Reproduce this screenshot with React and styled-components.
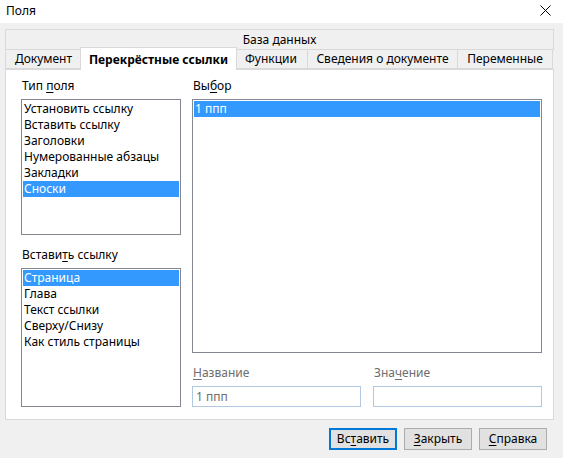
import React from 'react';
import styled, { createGlobalStyle } from 'styled-components';

const GlobalStyle = createGlobalStyle`
  html, body {
    margin: 0;
    padding: 0;
    background: #f0f0f0;
  }
  body {
    font-family: "Noto Sans", "Open Sans", sans-serif;
    font-size: 12px;
    color: #000;
  }
`;

const Window = styled.div`
  width: 563px;
  height: 458px;
  display: flex;
  flex-direction: column;
  background: #f0f0f0;
  overflow: hidden;
`;

const TitleBar = styled.div`
  height: 23px;
  background: #fff;
  display: flex;
  align-items: center;
  justify-content: space-between;
  padding: 0 12px 2px 6px;
  box-sizing: border-box;
`;

const Title = styled.span`
  font-size: 12px;
  line-height: 16px;
`;

const Body = styled.div`
  flex: 1;
  display: flex;
  flex-direction: column;
  padding: 6px 9px 0 5px;
`;

const TabRow = styled.div`
  display: flex;
  height: 20px;
`;

const Tab = styled.div`
  box-sizing: border-box;
  width: ${p => p.$w}px;
  flex: ${p => (p.$w ? 'none' : '1')};
  height: ${p => (p.$active ? '23px' : '100%')};
  margin: ${p => (p.$active ? '-2px -2px -1px -2px' : '0')};
  padding-top: ${p => (p.$active ? '1px' : '0')};
  position: relative;
  z-index: ${p => (p.$active ? 2 : 1)};
  display: flex;
  align-items: center;
  justify-content: center;
  background: ${p => (p.$active ? '#fff' : '#f0f0f0')};
  border: 1px solid #d9d9d9;
  border-bottom: ${p => (p.$active ? 'none' : '1px solid #d9d9d9')};
  border-left: ${p => (p.$first || p.$active ? '1px solid #d9d9d9' : 'none')};
  font-weight: ${p => (p.$active ? 700 : 400)};
  white-space: nowrap;
  line-height: 16px;
`;

const TopTabRow = styled(TabRow)`
  height: 21px;
  margin-bottom: -1px;
`;

const Panel = styled.div`
  box-sizing: border-box;
  height: 351px;
  background: #fff;
  border: 1px solid #d9d9d9;
  display: flex;
  gap: 11px;
  padding: 8px 11px 12px 15px;
`;

const LeftCol = styled.div`
  width: 160px;
  display: flex;
  flex-direction: column;
`;

const RightCol = styled.div`
  flex: 1;
  display: flex;
  flex-direction: column;
`;

const Label = styled.div`
  height: 16px;
  line-height: 16px;
  margin: ${p => p.$top || 0}px 0 5px 1px;
  color: ${p => (p.$disabled ? '#6d6d6d' : '#000')};
  white-space: nowrap;
`;

const Key = styled.span`
  text-decoration: underline;
  text-underline-offset: 2px;
`;

const ListBox = styled.div`
  box-sizing: border-box;
  height: ${p => p.$h}px;
  border: 1px solid #828790;
  padding: 1px;
  background: #fff;
`;

const Item = styled.div`
  height: 16px;
  line-height: 16px;
  padding-left: 1px;
  white-space: nowrap;
  background: ${p => (p.$selected ? '#3399ff' : 'transparent')};
  color: ${p => (p.$selected ? '#fff' : '#000')};
`;

const FieldRow = styled.div`
  display: flex;
  gap: 12px;
  margin-top: 12px;
`;

const Field = styled.div`
  flex: 1;
  display: flex;
  flex-direction: column;
`;

const Input = styled.div`
  box-sizing: border-box;
  height: 21px;
  border: 1px solid #b0c8e2;
  background: #fff;
  color: #6d6d6d;
  line-height: 19px;
  padding-left: 3px;
`;

const ButtonBar = styled.div`
  display: flex;
  justify-content: flex-end;
  gap: 7px;
  padding: 8px 7px 0 0;
`;

const Button = styled.div`
  box-sizing: border-box;
  width: 68px;
  height: 22px;
  display: flex;
  align-items: center;
  justify-content: center;
  background: #e1e1e1;
  border: ${p => (p.$default ? '2px solid #0078d7' : '1px solid #adadad')};
  line-height: 16px;
`;

const CloseIcon = () => (
  <svg width="11" height="11" viewBox="0 0 11 11">
    <path d="M0.5 0.5 L10.5 10.5 M10.5 0.5 L0.5 10.5" stroke="#000" strokeWidth="1" fill="none" />
  </svg>
);

const tabs = [
  { label: 'Документ', w: 77 },
  { label: 'Перекрёстные ссылки', w: 154, active: true },
  { label: 'Функции', w: 73 },
  { label: 'Сведения о документе', w: 150 },
  { label: 'Переменные', w: 95 },
];

const fieldTypes = ['Установить ссылку', 'Вставить ссылку', 'Заголовки', 'Нумерованные абзацы', 'Закладки', 'Сноски'];
const insertRefs = ['Страница', 'Глава', 'Текст ссылки', 'Сверху/Снизу', 'Как стиль страницы'];

export default function App() {
  return (
    <Window>
      <GlobalStyle />
      <TitleBar>
        <Title>Поля</Title>
        <CloseIcon />
      </TitleBar>
      <Body>
        <TopTabRow>
          <Tab $first>База данных</Tab>
        </TopTabRow>
        <TabRow>
          {tabs.map((t, i) => (
            <Tab key={t.label} $w={t.active ? t.w + 3 : t.w} $active={t.active} $first={i === 0}>
              {t.label}
            </Tab>
          ))}
        </TabRow>
        <Panel>
          <LeftCol>
            <Label>Тип <Key>п</Key>оля</Label>
            <ListBox $h={136}>
              {fieldTypes.map(f => (
                <Item key={f} $selected={f === 'Сноски'}>{f}</Item>
              ))}
            </ListBox>
            <Label $top={12}>Встави<Key>т</Key>ь ссылку</Label>
            <ListBox $h={140}>
              {insertRefs.map(r => (
                <Item key={r} $selected={r === 'Страница'}>{r}</Item>
              ))}
            </ListBox>
          </LeftCol>
          <RightCol>
            <Label>Вы<Key>б</Key>ор</Label>
            <ListBox $h={254}>
              <Item $selected>1 ппп</Item>
            </ListBox>
            <FieldRow>
              <Field>
                <Label $disabled><Key>Н</Key>азвание</Label>
                <Input>1 ппп</Input>
              </Field>
              <Field>
                <Label $disabled>Зна<Key>ч</Key>ение</Label>
                <Input />
              </Field>
            </FieldRow>
          </RightCol>
        </Panel>
        <ButtonBar>
          <Button $default>Вс<Key>т</Key>авить</Button>
          <Button><Key>З</Key>акрыть</Button>
          <Button><Key>С</Key>правка</Button>
        </ButtonBar>
      </Body>
    </Window>
  );
}
